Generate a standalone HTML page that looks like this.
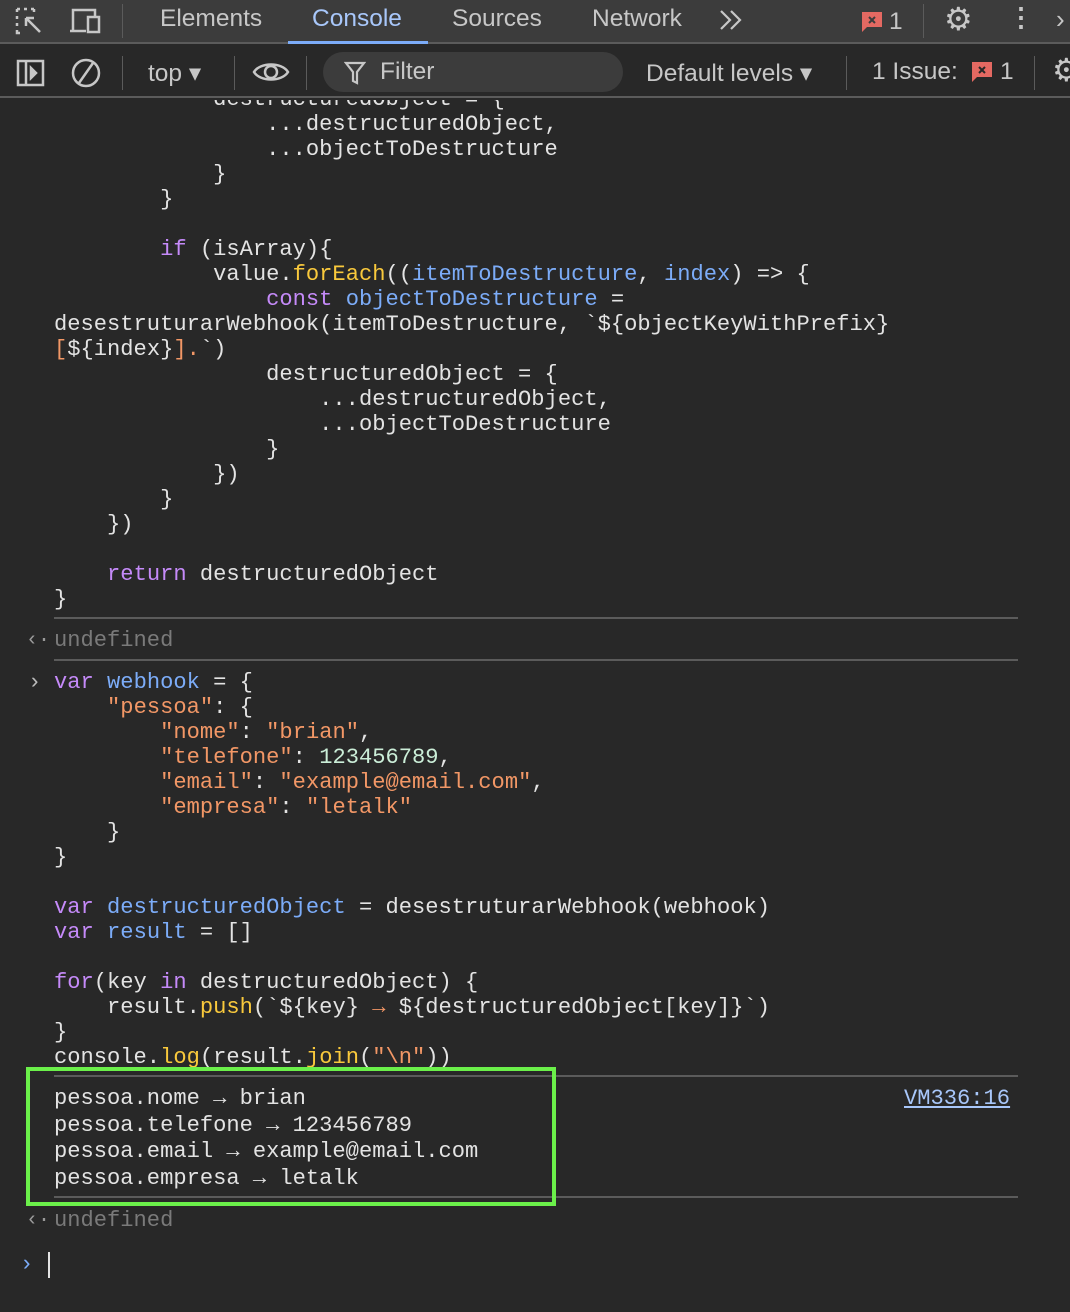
<!DOCTYPE html>
<html><head><meta charset="utf-8"><style>
*{margin:0;padding:0;box-sizing:border-box}
body{width:1070px;height:1312px;background:#282828;overflow:hidden;position:relative;font-family:"Liberation Sans",sans-serif;color:#e3e3e3}
.bar1{position:absolute;left:0;top:0;width:1070px;height:44px;background:#3c3c3c;border-bottom:2px solid #5b5b5b}
.bar2{position:absolute;left:0;top:46px;width:1070px;height:52px;background:#282828;border-bottom:2px solid #5b5b5b}
.t{position:absolute;font-size:24.5px;color:#c7c7c7;white-space:nowrap}
.vs{position:absolute;width:1px;background:#5b5b5b}
.main{position:absolute;left:0;top:100px;width:1070px;height:1212px;overflow:hidden}
pre{position:absolute;font-family:"Liberation Mono",monospace;font-size:22.1px;line-height:25px;color:#e3e3e3;white-space:pre;letter-spacing:0}
.k{color:#c58af9}.v{color:#7cacf8}.s{color:#f29766}.n{color:#cbeed8}.f{color:#f9c93c}
.sep{position:absolute;left:54px;width:964px;height:2px;background:#5b5b5b}
.und{color:#7a7a7a}
</style></head><body>
<div class="bar1">
<svg style="position:absolute;left:14px;top:6px" width="34" height="32" viewBox="0 0 34 32" fill="none" stroke="#c7c7c7" stroke-width="2.5"><path d="M3 3h3M10 3h3M17 3h3M3 3v3M3 10v3M3 17v3M3 24v3h3M20 3v3"/><path d="M12 12l14 14M12 12h8M12 12v8"/></svg>
<svg style="position:absolute;left:68px;top:5px" width="36" height="32" viewBox="0 0 36 32" fill="none" stroke="#c7c7c7" stroke-width="2.5"><path d="M5 26V5h22v6"/><path d="M2 26h16"/><rect x="20" y="12" width="11" height="15"/></svg>
<div class="vs" style="left:122px;top:4px;height:34px"></div>
<div class="t" style="left:160px;top:5px">Elements</div>
<div class="t" style="left:312px;top:5px;color:#a8c7fa">Console</div>
<div style="position:absolute;left:288px;top:41px;width:140px;height:3px;background:#7cacf8"></div>
<div class="t" style="left:452px;top:5px">Sources</div>
<div class="t" style="left:592px;top:5px">Network</div>
<svg style="position:absolute;left:718px;top:9px" width="26" height="22" viewBox="0 0 26 22" fill="none" stroke="#c7c7c7" stroke-width="2.2"><path d="M3 2l9 9-9 9M13 2l9 9-9 9"/></svg>
<svg style="position:absolute;left:861px;top:11px" width="22" height="22" viewBox="0 0 22 22"><path d="M1 1h20v15H6l-5 5z" fill="#e46962"/><path d="M8 6l6 6M14 6l-6 6" stroke="#3c3c3c" stroke-width="2"/></svg>
<div class="t" style="left:889px;top:8px">1</div>
<div class="vs" style="left:923px;top:4px;height:34px"></div>
<div class="t" style="left:944px;top:0px;font-size:32px">⚙</div>
<div class="t" style="left:1008px;top:2px;font-size:26px;font-weight:bold">⋮</div>
<div class="t" style="left:1056px;top:4px;font-size:26px">›</div>
</div>
<div class="bar2">
<svg style="position:absolute;left:16px;top:13px" width="30" height="28" viewBox="0 0 30 28" fill="none" stroke="#c7c7c7" stroke-width="2.5"><rect x="2" y="2" width="25" height="24"/><path d="M10 2v24"/><path d="M15 9l5 5-5 5z" fill="#c7c7c7"/></svg>
<svg style="position:absolute;left:70px;top:11px" width="32" height="32" viewBox="0 0 32 32" fill="none" stroke="#c7c7c7" stroke-width="2.5"><circle cx="16" cy="16" r="13"/><path d="M23 6L9 26"/></svg>
<div class="vs" style="left:122px;top:10px;height:34px"></div>
<div class="t" style="left:148px;top:12px">top ▾</div>
<div class="vs" style="left:234px;top:10px;height:34px"></div>
<svg style="position:absolute;left:252px;top:12px" width="38" height="28" viewBox="0 0 38 28" fill="none" stroke="#c7c7c7" stroke-width="2.5"><path d="M2 14C8 4 30 4 36 14C30 24 8 24 2 14z"/><circle cx="19" cy="14" r="6"/></svg>
<div class="vs" style="left:306px;top:10px;height:34px"></div>
<div style="position:absolute;left:323px;top:6px;width:300px;height:40px;border-radius:20px;background:#3c3c3c"></div>
<svg style="position:absolute;left:344px;top:15px" width="22" height="24" viewBox="0 0 22 24" fill="none" stroke="#c7c7c7" stroke-width="2.2"><path d="M2 2h18l-7 9v11l-4-2v-9z"/></svg>
<div class="t" style="left:380px;top:12px">Filter</div>
<div class="t" style="left:646px;top:12px">Default levels ▾</div>
<div class="vs" style="left:846px;top:10px;height:34px"></div>
<div class="t" style="left:872px;top:12px">1 Issue:</div>
<svg style="position:absolute;left:971px;top:15px" width="22" height="22" viewBox="0 0 22 22"><path d="M1 1h20v15H6l-5 5z" fill="#e46962"/><path d="M8 6l6 6M14 6l-6 6" stroke="#282828" stroke-width="2"/></svg>
<div class="t" style="left:1000px;top:12px">1</div>
<div class="vs" style="left:1034px;top:10px;height:34px"></div>
<div class="t" style="left:1052px;top:5px;font-size:32px">⚙</div>
</div>
<div class="main">
<pre style="left:54px;top:-13px">            destructuredObject = {
                ...destructuredObject,
                ...objectToDestructure
            }
        }

        <span class="k">if</span> (isArray){
            value.<span class="f">forEach</span>((<span class="v">itemToDestructure</span>, <span class="v">index</span>) =&gt; {
                <span class="k">const</span> <span class="v">objectToDestructure</span> =
desestruturarWebhook(itemToDestructure, `${objectKeyWithPrefix}
<span class="s">[</span>${index}<span class="s">].</span>`)
                destructuredObject = {
                    ...destructuredObject,
                    ...objectToDestructure
                }
            })
        }
    })

    <span class="k">return</span> destructuredObject
}</pre>
<div class="sep" style="top:517px"></div>
<pre style="left:26px;top:528px;color:#9a9a9a;font-size:20px">‹·</pre>
<pre style="left:54px;top:528px" class="und">undefined</pre>
<div class="sep" style="top:559px"></div>
<pre style="left:28px;top:570px;color:#bbb">›</pre>
<pre style="left:54px;top:570px"><span class="k">var</span> <span class="v">webhook</span> = {
    <span class="s">"pessoa"</span>: {
        <span class="s">"nome"</span>: <span class="s">"brian"</span>,
        <span class="s">"telefone"</span>: <span class="n">123456789</span>,
        <span class="s">"email"</span>: <span class="s">"example@email.com"</span>,
        <span class="s">"empresa"</span>: <span class="s">"letalk"</span>
    }
}

<span class="k">var</span> <span class="v">destructuredObject</span> = desestruturarWebhook(webhook)
<span class="k">var</span> <span class="v">result</span> = []

<span class="k">for</span>(key <span class="k">in</span> destructuredObject) {
    result.<span class="f">push</span>(`${key} <span class="s">→</span> ${destructuredObject[key]}`)
}
console.<span class="f">log</span>(result.<span class="f">join</span>(<span class="s">"\n"</span>))</pre>
<div class="sep" style="top:975px"></div>
<pre style="left:54px;top:986px;line-height:26.7px">pessoa.nome → brian
pessoa.telefone → 123456789
pessoa.email → example@email.com
pessoa.empresa → letalk</pre>
<pre style="left:904px;top:986px;color:#a8c7fa;text-decoration:underline">VM336:16</pre>
<div class="sep" style="top:1096px"></div>
<div style="position:absolute;left:26px;top:967px;width:530px;height:139px;border:4px solid #6bf04a"></div>
<pre style="left:26px;top:1108px;color:#9a9a9a;font-size:20px">‹·</pre>
<pre style="left:54px;top:1108px" class="und">undefined</pre>
<pre style="left:20px;top:1152px;color:#7cacf8">›</pre>
<div style="position:absolute;left:48px;top:1152px;width:2px;height:26px;background:#e3e3e3"></div>
</div>
</body></html>
